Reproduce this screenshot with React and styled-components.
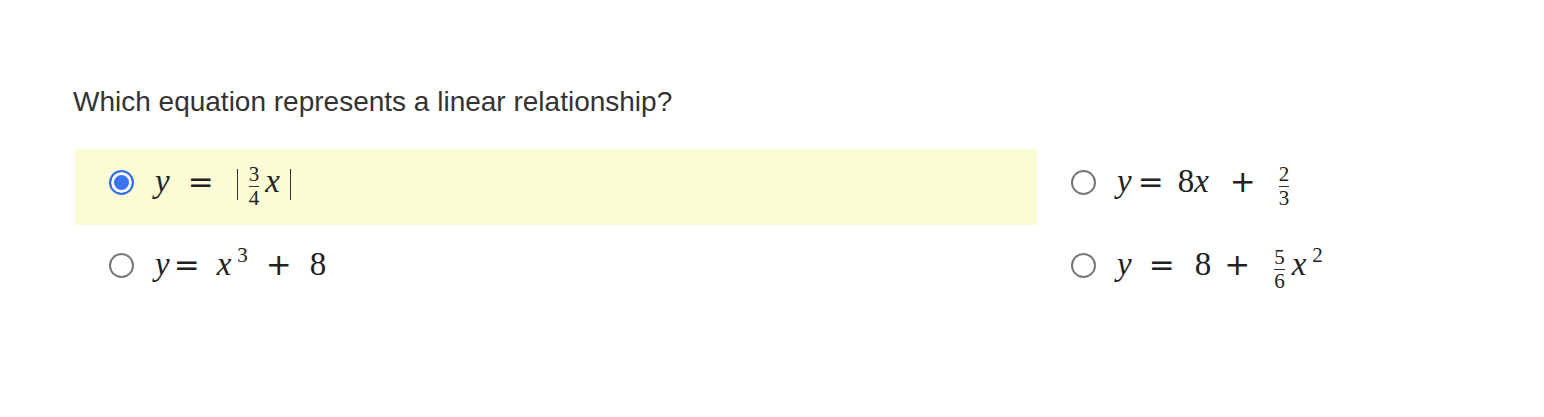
import React, { useState } from "react";
import styled, { createGlobalStyle } from "styled-components";

const Global = createGlobalStyle`
  body {
    margin: 0;
    background: #ffffff;
    font-family: "Liberation Sans", Arial, sans-serif;
  }
`;

const Page = styled.div`
  padding: 86px 0 0 73px;
`;

const Question = styled.div`
  font-size: 28px;
  line-height: 32px;
  color: #333333;
  margin-bottom: 31px;
`;

const Choices = styled.div`
  display: grid;
  grid-template-columns: 962px 1fr;
  row-gap: 7px;
  margin-left: 2px;
`;

const Choice = styled.label`
  display: flex;
  align-items: flex-start;
  box-sizing: border-box;
  height: 76px;
  padding: 21px 0 0 34px;
  background: ${(p) => (p.$selected ? "#fbfbd5" : "transparent")};
  cursor: pointer;
`;

const Radio = styled.span`
  box-sizing: border-box;
  width: 25px;
  height: 25px;
  border-radius: 50%;
  flex-shrink: 0;
  border: 2px solid ${(p) => (p.$checked ? "#2f6fe4" : "#767676")};
  background: ${(p) => (p.$checked ? "#3874ee" : "#ffffff")};
  box-shadow: ${(p) => (p.$checked ? "inset 0 0 0 3px #ffffff" : "none")};
  margin-right: 21px;
`;

const Math = styled.span`
  display: block;
  height: 25px;
  line-height: 23px;
  white-space: nowrap;
  font-family: "Liberation Serif", "Times New Roman", serif;
  font-size: 33px;
  color: #222222;
`;

const V = styled.span`
  font-style: italic;
  margin-left: ${(p) => p.$ml || 0}px;
`;

const N = styled.span`
  margin-left: ${(p) => p.$ml || 0}px;
`;

const Op = styled.span`
  font-family: "DejaVu Sans", sans-serif;
  font-size: 31px;
  line-height: 0;
  margin-left: ${(p) => p.$ml || 0}px;
`;

const Bar = styled.span`
  display: inline-block;
  width: 1.2px;
  height: 31px;
  background: #333;
  vertical-align: -8px;
  margin-top: -12px;
  margin-left: ${(p) => p.$ml || 0}px;
`;

const Sup = styled.span`
  font-size: 21px;
  line-height: 0;
  vertical-align: 13px;
  margin-left: ${(p) => p.$ml || 2}px;
`;

const FracBox = styled.span`
  display: inline-flex;
  flex-direction: column;
  align-items: center;
  vertical-align: middle;
  padding: 0 2px;
  font-size: 21px;
  line-height: 18px;
  margin: -20px 0 -24px ${(p) => p.$ml || 0}px;
`;

const FracLine = styled.span`
  display: block;
  align-self: stretch;
  height: 1px;
  background: #333;
  margin: 3px 0 2px;
`;

const Frac = ({ n, d, ml }) => (
  <FracBox $ml={ml}>
    <span>{n}</span>
    <FracLine />
    <span>{d}</span>
  </FracBox>
);

const options = [
  {
    id: "a",
    math: (
      <>
        <V>y</V>
        <Op $ml={18}>=</Op>
        <Bar $ml={23} />
        <Frac n="3" d="4" ml={9} />
        <V $ml={4}>x</V>
        <Bar $ml={10} />
      </>
    ),
  },
  {
    id: "b",
    math: (
      <>
        <V>y</V>
        <Op $ml={6}>=</Op>
        <N $ml={14}>8</N>
        <V>x</V>
        <Op $ml={21}>+</Op>
        <Frac n="2" d="3" ml={21} />
      </>
    ),
  },
  {
    id: "c",
    math: (
      <>
        <V>y</V>
        <Op $ml={4}>=</Op>
        <V $ml={17}>x</V>
        <Sup $ml={6}>3</Sup>
        <Op $ml={18}>+</Op>
        <N $ml={18}>8</N>
      </>
    ),
  },
  {
    id: "d",
    math: (
      <>
        <V>y</V>
        <Op $ml={17}>=</Op>
        <N $ml={20}>8</N>
        <Op $ml={13}>+</Op>
        <Frac n="5" d="6" ml={22} />
        <V $ml={5}>x</V>
        <Sup $ml={6}>2</Sup>
      </>
    ),
  },
];

const App = () => {
  const [selected, setSelected] = useState("a");
  return (
    <Page>
      <Global />
      <Question>Which equation represents a linear relationship?</Question>
      <Choices>
        {options.map((o) => (
          <Choice
            key={o.id}
            $selected={selected === o.id}
            onClick={() => setSelected(o.id)}
          >
            <Radio $checked={selected === o.id} />
            <Math>{o.math}</Math>
          </Choice>
        ))}
      </Choices>
    </Page>
  );
};

export default App;
